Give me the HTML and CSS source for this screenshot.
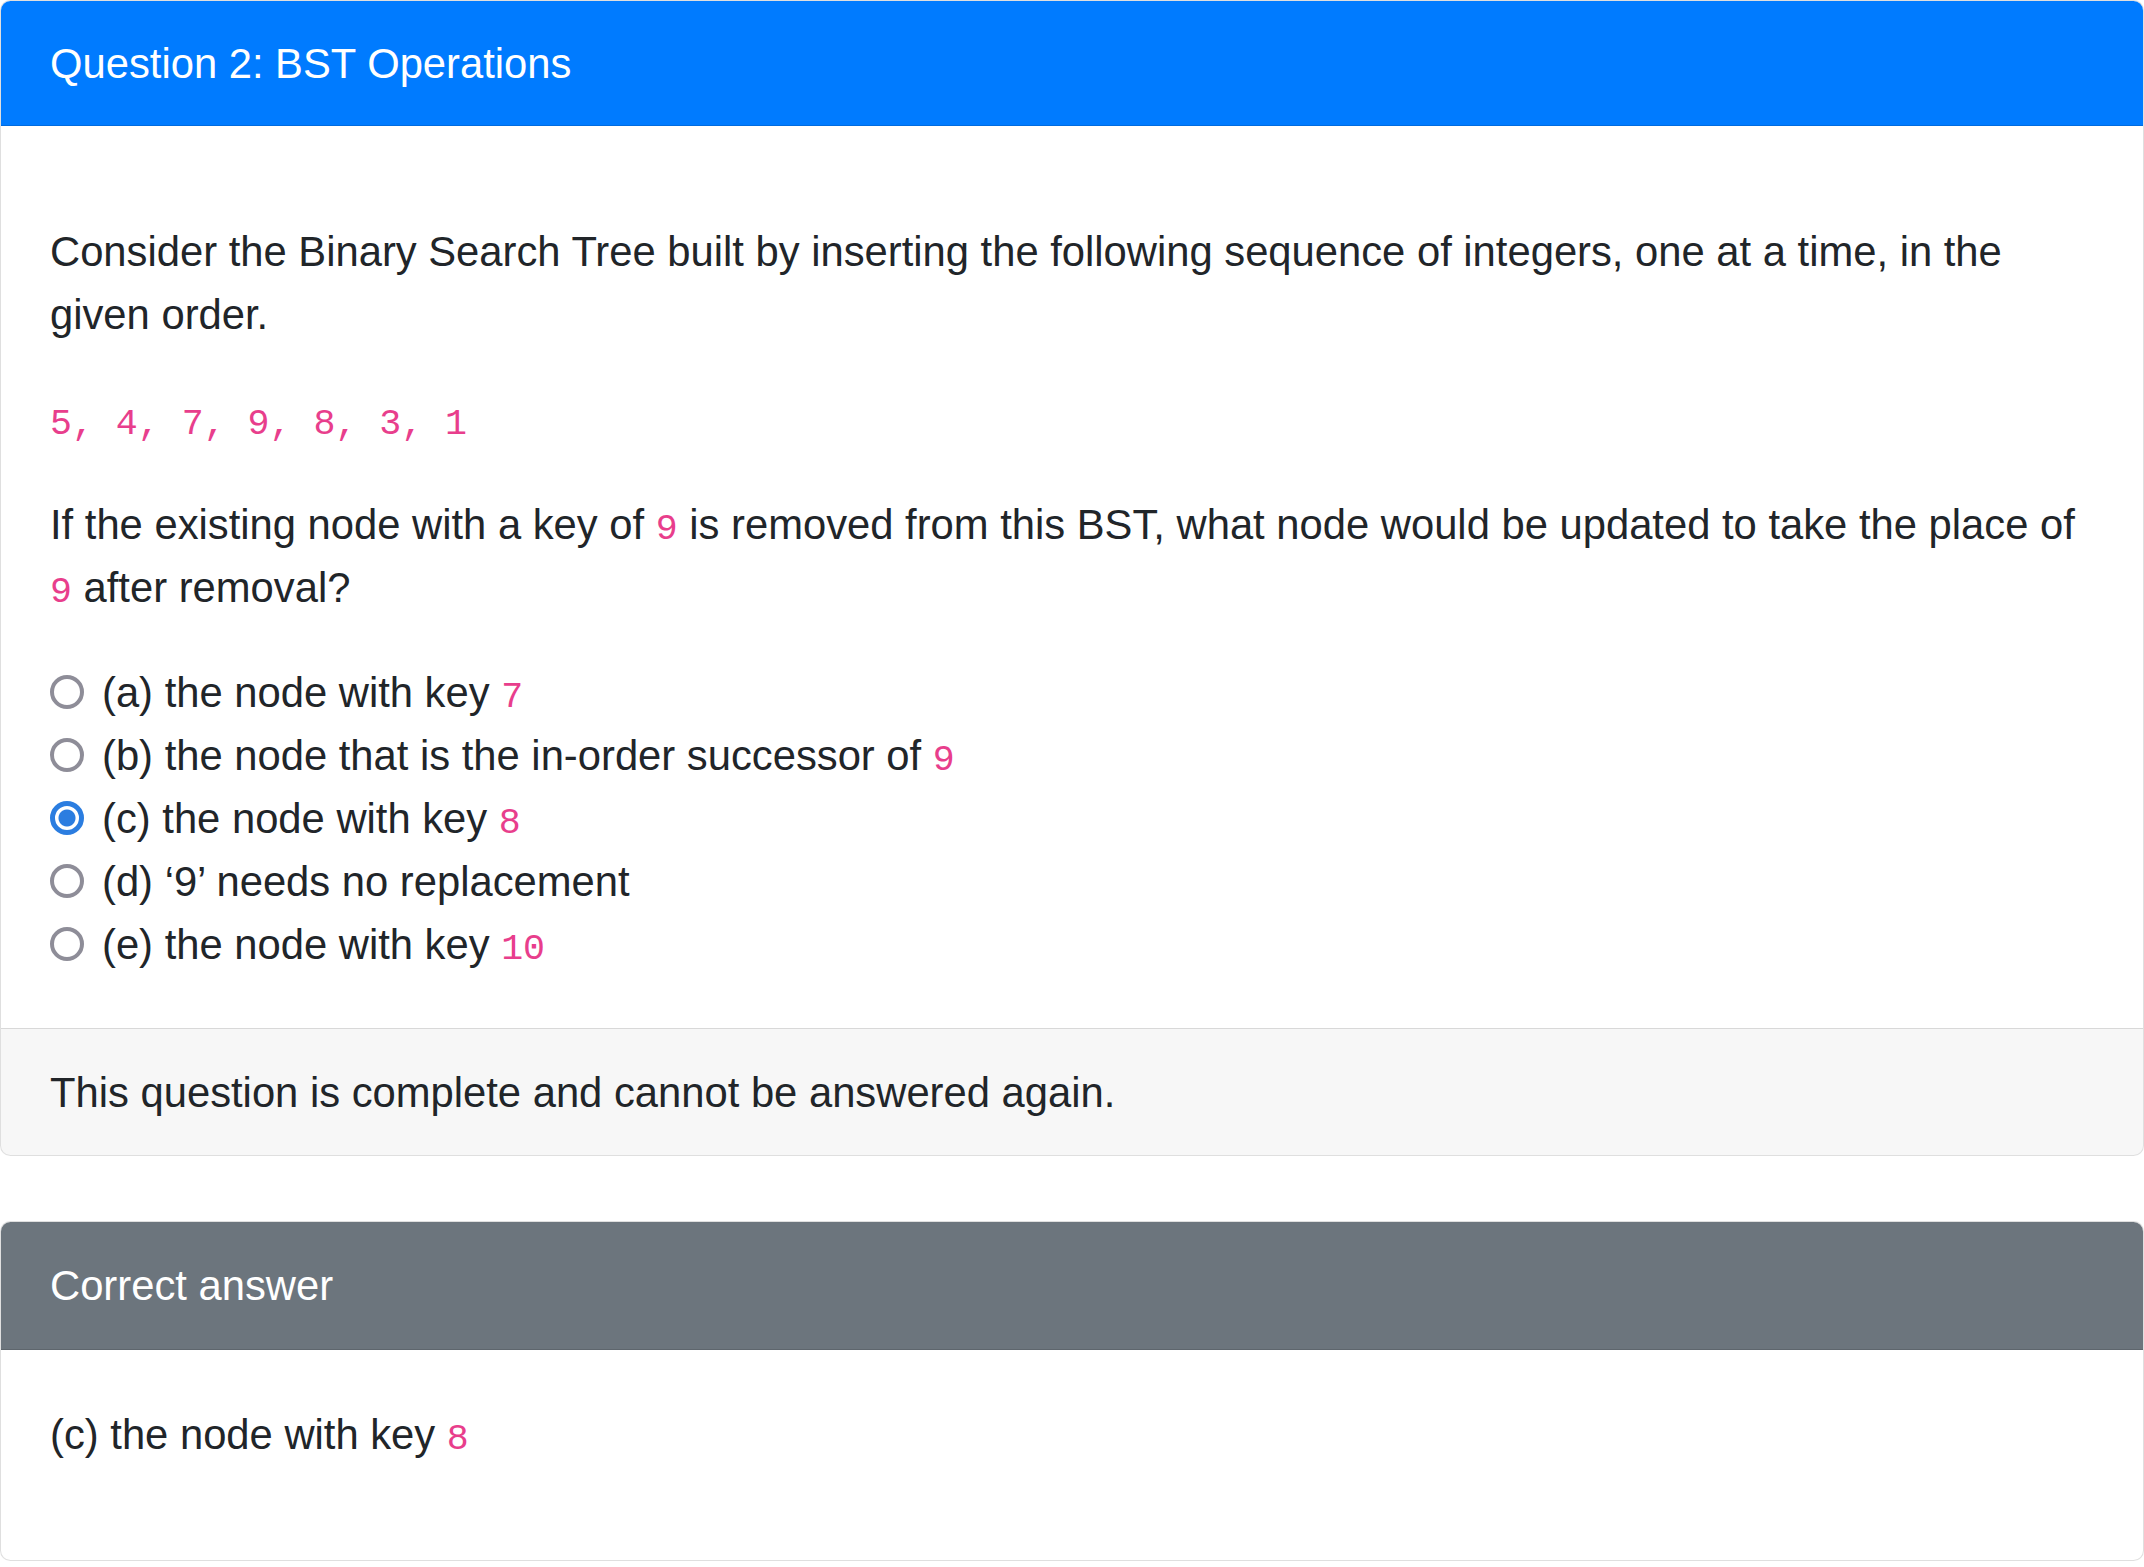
FILE: index.html
```html
<!DOCTYPE html>
<html lang="en">
<head>
<meta charset="utf-8">
<title>Question 2: BST Operations</title>
<link rel="stylesheet" href="styles.css">
</head>
<body>
<div class="card">
  <div class="card-header header-primary">Question 2: BST Operations</div>
  <div class="card-body question-body">
    <p>Consider the Binary Search Tree built by inserting the following sequence of integers, one at a time, in the given order.</p>
    <p><code>5, 4, 7, 9, 8, 3, 1</code></p>
    <p>If the existing node with a key of <code>9</code> is removed from this BST, what node would be updated to take the place of <code>9</code> after removal?</p>
    <div class="options">
      <label class="form-check"><input class="radio" type="radio" name="q2" disabled><span>(a) the node with key <code>7</code></span></label>
      <label class="form-check"><input class="radio" type="radio" name="q2" disabled><span>(b) the node that is the in-order successor of <code>9</code></span></label>
      <label class="form-check"><input class="radio" type="radio" name="q2" checked disabled><span>(c) the node with key <code>8</code></span></label>
      <label class="form-check"><input class="radio" type="radio" name="q2" disabled><span>(d) ‘9’ needs no replacement</span></label>
      <label class="form-check"><input class="radio" type="radio" name="q2" disabled><span>(e) the node with key <code>10</code></span></label>
    </div>
  </div>
  <div class="card-footer">This question is complete and cannot be answered again.</div>
</div>

<div class="card card-gap">
  <div class="card-header header-secondary">Correct answer</div>
  <div class="card-body">
    <p>(c) the node with key <code>8</code></p>
  </div>
</div>
</body>
</html>
```
FILE: styles.css
```css
html {
  font-size: 42px;
}
body {
  margin: 0;
  font-family: "Liberation Sans", Arial, sans-serif;
  font-size: 41.75px;
  line-height: 63px;
  color: #212529;
  background: #fff;
}
p {
  margin: 0 0 42px 0;
}
code {
  font-family: "Liberation Mono", "Courier New", monospace;
  font-size: 36.6px;
  line-height: 1;
  color: #e83e8c;
}
.card {
  display: flex;
  flex-direction: column;
  border: 1px solid rgba(0, 0, 0, 0.125);
  border-radius: 10.5px;
  overflow: hidden;
  background: #fff;
}
.card-gap {
  margin-top: 65px;
}
.card-header {
  padding: 30.5px 49px;
  border-bottom: 1px solid rgba(0, 0, 0, 0.125);
  color: #fff;
}
.header-primary {
  background: #007bff;
}
.header-secondary {
  background: #6c757d;
  padding-top: 32px;
  padding-bottom: 32px;
}
.card-body {
  padding: 52.5px 49px;
}
.question-body {
  padding-top: 93.5px;
}
.card-footer {
  padding: 31.5px 49px;
  background: rgba(0, 0, 0, 0.03);
  border-top: 1px solid rgba(0, 0, 0, 0.125);
}
.options {
  display: flex;
  flex-direction: column;
}
.form-check {
  display: flex;
  align-items: center;
  gap: 18px;
  height: 63px;
}
.radio {
  appearance: none;
  -webkit-appearance: none;
  margin: 0;
  width: 34px;
  height: 34px;
  flex: none;
  border: 4.5px solid #8e8d98;
  border-radius: 50%;
  background: #fff;
  box-sizing: border-box;
}
.radio:checked {
  border: 5px solid #2b7de0;
  background: radial-gradient(circle, #2b7de0 0 8px, #fff 9px);
}
```
